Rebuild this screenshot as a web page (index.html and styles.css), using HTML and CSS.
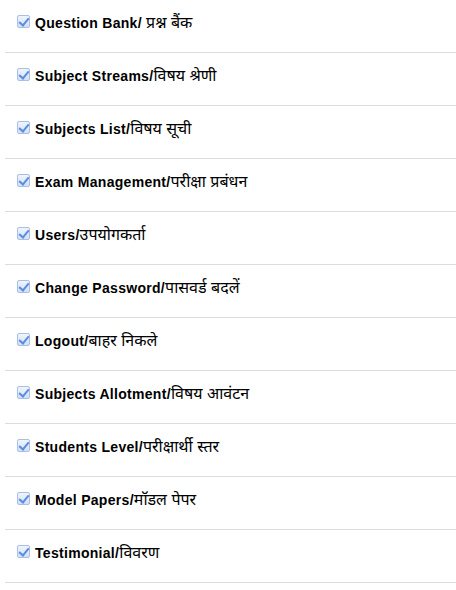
FILE: index.html
```html
<!DOCTYPE html>
<html>
<head>
<meta charset="utf-8">
<link rel="stylesheet" href="styles.css">
</head>
<body>
<ul class="menu">
  <li class="item"><span class="cb"></span><span class="label">Question Bank/ <span class="hi">प्रश्न बैंक</span></span></li>
  <li class="item"><span class="cb"></span><span class="label">Subject Streams/<span class="hi">विषय श्रेणी</span></span></li>
  <li class="item"><span class="cb"></span><span class="label">Subjects List/<span class="hi">विषय सूची</span></span></li>
  <li class="item"><span class="cb"></span><span class="label">Exam Management/<span class="hi">परीक्षा प्रबंधन</span></span></li>
  <li class="item"><span class="cb"></span><span class="label">Users/<span class="hi">उपयोगकर्ता</span></span></li>
  <li class="item"><span class="cb"></span><span class="label">Change Password/<span class="hi">पासवर्ड बदलें</span></span></li>
  <li class="item"><span class="cb"></span><span class="label">Logout/<span class="hi">बाहर निकले</span></span></li>
  <li class="item"><span class="cb"></span><span class="label">Subjects Allotment/<span class="hi">विषय आवंटन</span></span></li>
  <li class="item"><span class="cb"></span><span class="label">Students Level/<span class="hi">परीक्षार्थी स्तर</span></span></li>
  <li class="item"><span class="cb"></span><span class="label">Model Papers/<span class="hi">मॉडल पेपर</span></span></li>
  <li class="item"><span class="cb"></span><span class="label">Testimonial/<span class="hi">विवरण</span></span></li>
</ul>
</body>
</html>
```
FILE: styles.css
```css
html, body {
  margin: 0;
  padding: 0;
  background: #fff;
}
.menu {
  list-style: none;
  margin: 0 0 0 5px;
  padding: 0;
}
.item {
  height: 52px;
  border-bottom: 1px solid #dddddd;
  display: flex;
  align-items: flex-start;
  padding-left: 12px;
  box-sizing: content-box;
}
.cb {
  width: 11px;
  height: 11px;
  margin-top: 15px;
  border: 1px solid #a9bfe3;
  border-radius: 2px;
  background: linear-gradient(#f0f5fd, #d3e0f5);
  position: relative;
  flex: none;
}
.cb::after {
  content: "";
  position: absolute;
  left: 3px;
  top: 0px;
  width: 4px;
  height: 8px;
  border: solid #5b8de0;
  border-width: 0 2px 2px 0;
  transform: rotate(40deg);
}
.label {
  margin-left: 5px;
  margin-top: 15px;
  font-family: "Liberation Sans", Arial, "Noto Sans", sans-serif;
  font-weight: bold;
  font-size: 14px;
  letter-spacing: 0.3px;
  line-height: 16px;
  color: #000;
  white-space: nowrap;
}
.hi {
  font-weight: normal;
  font-size: 16px;
  letter-spacing: 0;
  line-height: 16px;
}
```
